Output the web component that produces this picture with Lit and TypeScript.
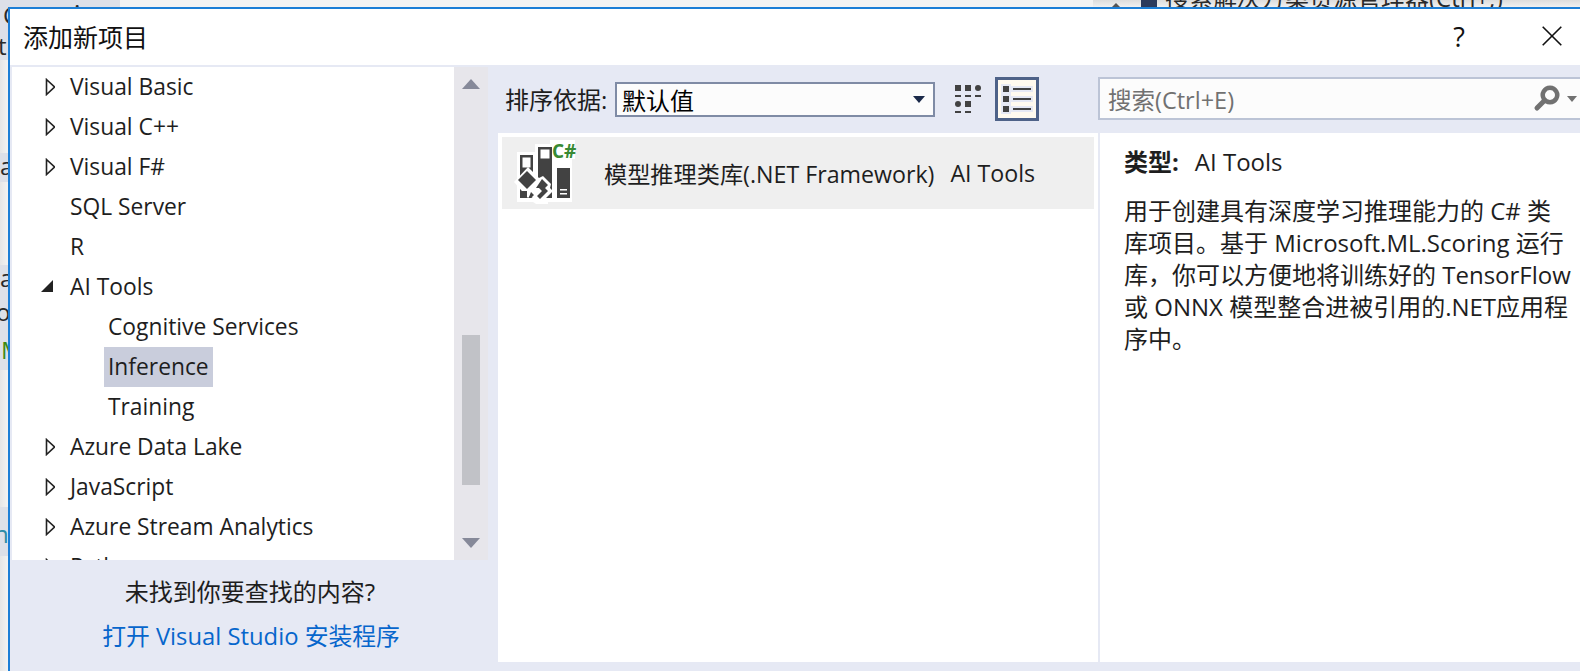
import { LitElement, html, css, svg } from 'lit';
import { customElement } from 'lit/decorators.js';
import { classMap } from 'lit/directives/class-map.js';

type TreeRow = { label: string; level: number; arrow?: 'open' | 'closed'; selected?: boolean };

const TREE: TreeRow[] = [
  { label: 'Visual Basic', level: 1, arrow: 'closed' },
  { label: 'Visual C++', level: 1, arrow: 'closed' },
  { label: 'Visual F#', level: 1, arrow: 'closed' },
  { label: 'SQL Server', level: 1 },
  { label: 'R', level: 1 },
  { label: 'AI Tools', level: 1, arrow: 'open' },
  { label: 'Cognitive Services', level: 2 },
  { label: 'Inference', level: 2, selected: true },
  { label: 'Training', level: 2 },
  { label: 'Azure Data Lake', level: 1, arrow: 'closed' },
  { label: 'JavaScript', level: 1, arrow: 'closed' },
  { label: 'Azure Stream Analytics', level: 1, arrow: 'closed' },
  { label: 'Python', level: 1, arrow: 'closed' },
];

const DESCRIPTION = [
  '用于创建具有深度学习推理能力的 C# 类',
  '库项目。基于 Microsoft.ML.Scoring 运行',
  '库，你可以方便地将训练好的 TensorFlow',
  '或 ONNX 模型整合进被引用的.NET应用程',
  '序中。',
];

const projectIcon = svg`
  <svg class="project-icon" width="68" height="70" viewBox="0 0 68 70">
    <path fill="#fff" d="M7 14h18v-8h15v-4h25v19h-3v43h-24v2h-12l-3-2h-16z"/>
    <path fill="#424242" d="M10 17h13v43h-13zM28 9h14v51h-14zM47 25h13v35h-13z"/>
    <path fill="#fff" d="M12.500 19.500h8v10h-8zM30.500 11.500h9v9h-9zM47 21h13v9h-13z"/>
    <path fill="#fff" d="M50 51h7v1.500h-7zM50 55h7v1.500h-7z"/>
    <path fill="#fff" d="M18 29l11 11 4-2 8 8-1 4 3 3-11 11-4 0-8-6-2 2-14-16z"/>
    <path fill="#424242" d="M17 33l9 9-9 9-9-9z"/>
    <path fill="#424242" d="M32 41l6 6-3 3 3 3-8 8-3-3 5-5-3-3-3 0zM12 53l5 0 0 6h-5zM21 54l3 3-2 2h-3z"/>
    <text x="42" y="20" class="cs">C#</text>
  </svg>
`;

const gridIcon = svg`
  <svg width="26" height="28" viewBox="0 0 26 28" fill="#424242">
    <rect x="0" y="0" width="6" height="6"/>
    <rect x="10" y="0" width="6" height="6"/>
    <circle cx="23" cy="3" r="3"/>
    <rect x="0" y="10" width="6" height="2"/>
    <rect x="10" y="10" width="6" height="2"/>
    <rect x="20" y="10" width="6" height="2"/>
    <circle cx="3" cy="19" r="3"/>
    <rect x="10" y="16" width="6" height="6"/>
    <rect x="0" y="26" width="6" height="2"/>
    <rect x="10" y="26" width="6" height="2"/>
  </svg>
`;

const listIcon = svg`
  <svg width="32" height="30" viewBox="0 0 32 30">
    <path fill="#e6e9f4" d="M0 0h10v30h-10zM10 2h22v6h-22zM10 12h22v6h-22zM10 22h22v6h-22z"/>
    <path fill="#424242" d="M2 2h6v6h-6zM2 12h6v6h-6zM2 22h6v6h-6zM12 4h18v2h-18zM12 14h18v2h-18zM12 24h18v2h-18z"/>
  </svg>
`;

const searchIcon = svg`
  <svg width="27" height="27" viewBox="0 0 27 27">
    <path fill="none" stroke="#717171" stroke-width="4.500" d="M17 2.800a7.200 7.200 0 1 1-.01 0z"/>
    <path stroke="#717171" stroke-width="5" stroke-linecap="round" d="M11 16l-7 7"/>
  </svg>
`;

@customElement('app-root')
export class AppRoot extends LitElement {
  static styles = css`
    :host {
      display: block;
      position: relative;
      width: 1580px;
      height: 671px;
      overflow: hidden;
      color: #1e1e1e;
      font-family: 'Open Sans', 'Noto Sans CJK SC', sans-serif;
      font-size: 22.800px;
      background: linear-gradient(to right, #e6e6e6, #f3f3f3 8px);
    }

    /* what shows of the main window behind the dialog */
    .behind {
      position: absolute;
      inset: 0;
    }
    .band {
      position: absolute;
      left: 0;
      width: 120px;
      background: #dde0e8;
    }
    .frag {
      position: absolute;
      line-height: 1;
      font-size: 24px;
      color: #2a2a2a;
    }
    .top-right {
      position: absolute;
      top: 0;
      left: 1093px;
      width: 487px;
      height: 7px;
      background: linear-gradient(#dcdcdc, #f0f0f0);
    }
    .top-right i {
      position: absolute;
      left: 48px;
      top: 0;
      width: 16px;
      height: 7px;
      background: #2b3a5c;
    }
    .top-right svg {
      position: absolute;
      left: 19px;
      top: 3px;
    }

    .dialog {
      position: absolute;
      left: 8px;
      top: 7px;
      right: 0;
      height: 664px;
      box-sizing: border-box;
      border-top: 2px solid #1c7ed6;
      border-left: 2px solid #1c7ed6;
      background: #e6e9f4;
      display: flex;
      flex-direction: column;
    }

    .title {
      flex: none;
      height: 56px;
      box-sizing: border-box;
      padding: 0 0 2px 13px;
      background: #fff;
      display: flex;
      align-items: center;
      font-size: 25px;
      color: #111;
    }
    .title .name {
      flex: 1;
    }
    .help {
      width: 30px;
      text-align: center;
      margin-right: 68px;
      font-size: 27px;
      color: #111;
    }
    .close {
      display: block;
      margin-right: 18px;
    }

    .body {
      flex: 1;
      min-height: 0;
      display: flex;
    }

    .side {
      flex: none;
      width: 488px;
      display: flex;
      flex-direction: column;
    }
    .tree-wrap {
      flex: none;
      height: 493px;
      margin: 2px 10px 0 2px;
      display: flex;
    }
    .tree {
      flex: 1;
      background: #fff;
      overflow: hidden;
    }
    .row {
      position: relative;
      height: 40px;
      line-height: 39px;
      white-space: nowrap;
    }
    .row.l1 {
      padding-left: 58px;
    }
    .row.l2 {
      padding-left: 96px;
    }
    .row .text {
      display: inline-block;
      padding-bottom: 1px;
    }
    .row.selected .text {
      background: #c9cddc;
      margin-left: -4px;
      padding: 0 4px 1px;
    }
    .arrow {
      position: absolute;
      left: 27px;
      top: 11px;
    }

    .scrollbar {
      flex: none;
      width: 34px;
      background: #e7e6eb;
      display: flex;
      flex-direction: column;
      align-items: center;
      padding-top: 12px;
      box-sizing: border-box;
    }
    .thumb {
      width: 18px;
      height: 150px;
      margin-top: 246px;
      margin-bottom: 53px;
      background: #c1c2c7;
    }
    .scrollbar svg {
      display: block;
    }

    .footer {
      flex: 1;
      padding-right: 8px;
      text-align: center;
      font-size: 24px;
    }
    .footer p {
      margin: 0;
      height: 44px;
      line-height: 44px;
    }
    .footer p:first-child {
      margin-top: 10px;
    }
    .footer a {
      color: #0766cc;
      text-decoration: none;
      font-size: 23.800px;
      margin-left: 2px;
    }

    .main {
      flex: 1;
      min-width: 0;
      display: flex;
      flex-direction: column;
    }
    .toolbar {
      flex: none;
      height: 68px;
      display: flex;
      align-items: flex-start;
    }
    .sort {
      margin: 17px 0 0 7px;
      width: 110px;
      line-height: 35px;
      font-size: 24px;
      white-space: nowrap;
    }
    .select {
      width: 320px;
      height: 35px;
      margin-top: 17px;
      box-sizing: border-box;
      border: 2px solid #7f8ba5;
      background: #fcfcfc;
      display: flex;
      align-items: center;
      justify-content: space-between;
      padding: 0 8px 0 5px;
      font-size: 24px;
      color: #000;
    }
    .grid-btn {
      margin: 20px 14px 0 20px;
    }
    .list-btn {
      width: 44px;
      height: 44px;
      margin-top: 12px;
      box-sizing: border-box;
      border: 3px solid #4e6288;
      background: #fffaef;
      display: flex;
      align-items: center;
      justify-content: center;
    }
    .search {
      flex: 1;
      height: 43px;
      margin: 12px 0 0 59px;
      box-sizing: border-box;
      border: 2px solid #bcc4d6;
      border-right: none;
      background: #fcfcfc;
      display: flex;
      align-items: center;
      padding-left: 8px;
      color: #717171;
      font-size: 23.500px;
    }
    .search .hint {
      flex: 1;
    }
    .search .caret {
      margin: 0 3px 0 7px;
    }

    .panel {
      flex: none;
      height: 529px;
      display: flex;
      background: #fff;
    }
    .items {
      flex: none;
      width: 600px;
      box-sizing: border-box;
      padding: 4px 4px 0;
    }
    .item {
      height: 72px;
      background: #efefef;
      display: flex;
      align-items: center;
      white-space: nowrap;
      font-size: 23.200px;
    }
    .project-icon {
      display: block;
      margin: 0 26px 0 8px;
    }
    .cs {
      font-family: 'Open Sans', sans-serif;
      font-weight: 700;
      font-size: 19px;
      fill: #388a34;
    }
    .item .lang {
      margin-left: 16px;
    }

    .details {
      flex: 1;
      border-left: 2px solid #e6e9f4;
      padding: 13px 0 0 24px;
      line-height: 32px;
      font-size: 24px;
      white-space: nowrap;
    }
    .details .type {
      margin-bottom: 17px;
    }
    .details b {
      font-weight: 700;
      margin-right: 16px;
    }
  `;

  private renderRow(row: TreeRow) {
    return html`
      <div class=${classMap({ row: true, l1: row.level === 1, l2: row.level === 2, selected: !!row.selected })}>
        ${row.arrow === 'closed'
          ? html`<svg class="arrow" width="16" height="18" viewBox="0 0 16 18">
              <path d="M7.500 1.500l8 7.500-8 7.500z" fill="#fff" stroke="#222" stroke-width="1.600" />
            </svg>`
          : ''}
        ${row.arrow === 'open'
          ? html`<svg class="arrow open" width="16" height="18" viewBox="0 0 16 18">
              <path d="M2 14L14 2v12z" fill="#222" />
            </svg>`
          : ''}
        <span class="text">${row.label}</span>
      </div>
    `;
  }

  render() {
    return html`
      <div class="behind">
        <div class="band" style="top:0;height:60px"></div>
        <div class="band" style="top:153px;height:29px;width:8px"></div>
        <div class="band" style="top:265px;height:105px;width:8px"></div>
        <div class="band" style="top:507px;height:49px;width:8px"></div>
        <span class="frag" style="left:3px;top:3px">C</span>
        <span class="frag" style="left:74px;top:-13px">.</span>
        <span class="frag" style="left:-2px;top:34px">t</span>
        <span class="frag" style="left:0;top:154px">a</span>
        <span class="frag" style="left:0;top:266px">a</span>
        <span class="frag" style="left:-4px;top:300px">o</span>
        <span class="frag" style="left:1px;top:338px;color:#3c8a12">M</span>
        <span class="frag" style="left:-6px;top:522px;color:#2b8ca8">n</span>
        <div class="top-right">
          <svg width="8" height="4" viewBox="0 0 8 4"><path d="M4 0l4 4H0z" fill="#555" /></svg>
          <i></i>
          <span class="frag" style="left:72px;top:-14px;white-space:nowrap">搜索解决方案资源管理器(Ctrl+;)</span>
        </div>
      </div>

      <div class="dialog">
        <div class="title">
          <span class="name">添加新项目</span>
          <span class="help">?</span>
          <svg class="close" width="20" height="20" viewBox="0 0 20 20">
            <path d="M.7.7l18.600 18.600M19.300.7L.7 19.300" stroke="#111" stroke-width="1.600" fill="none" />
          </svg>
        </div>

        <div class="body">
          <div class="side">
            <div class="tree-wrap">
              <div class="tree">${TREE.map((r) => this.renderRow(r))}</div>
              <div class="scrollbar">
                <svg width="18" height="10" viewBox="0 0 18 10"><path d="M9 0l9 10H0z" fill="#868999" /></svg>
                <div class="thumb"></div>
                <svg width="18" height="10" viewBox="0 0 18 10"><path d="M0 0h18l-9 10z" fill="#868999" /></svg>
              </div>
            </div>
            <div class="footer">
              <p>未找到你要查找的内容?</p>
              <p><a href="#">打开 Visual Studio 安装程序</a></p>
            </div>
          </div>

          <div class="main">
            <div class="toolbar">
              <span class="sort">排序依据:</span>
              <div class="select">
                <span>默认值</span>
                <svg width="12" height="7" viewBox="0 0 12 7"><path d="M0 0h12L6 7z" fill="#1b2a4a" /></svg>
              </div>
              <div class="grid-btn">${gridIcon}</div>
              <div class="list-btn">${listIcon}</div>
              <div class="search">
                <span class="hint">搜索(Ctrl+E)</span>
                ${searchIcon}
                <svg class="caret" width="10" height="6" viewBox="0 0 10 6"><path d="M0 0h10L5 6z" fill="#717171" /></svg>
              </div>
            </div>

            <div class="panel">
              <div class="items">
                <div class="item">
                  ${projectIcon}
                  <span>模型推理类库(.NET Framework)</span>
                  <span class="lang">AI Tools</span>
                </div>
              </div>
              <div class="details">
                <div class="type"><b>类型:</b>AI Tools</div>
                ${DESCRIPTION.map((line) => html`<div>${line}</div>`)}
              </div>
            </div>
          </div>
        </div>
      </div>
    `;
  }
}
